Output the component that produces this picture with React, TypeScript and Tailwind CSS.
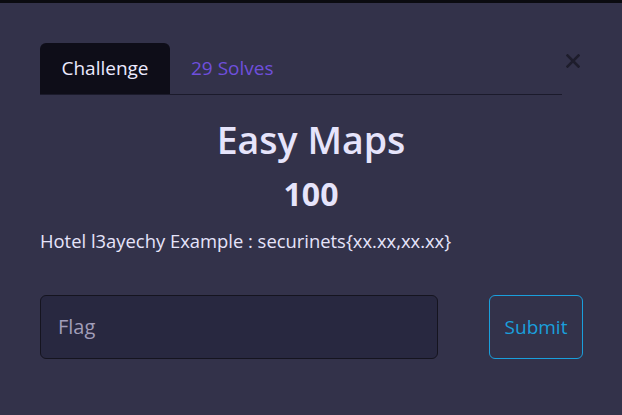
export default function App() {
  return (
    <div
      className="w-[622px] h-[415px] bg-[#33324a] border-t-[3px] border-[#0b0b10] overflow-hidden"
      style={{ fontFamily: '"Open Sans", "Noto Sans", sans-serif' }}
    >
      <div className="px-10 pt-10">
        {/* Tabs */}
        <div className="flex items-start">
          <div className="w-[522px] shrink-0 flex items-end border-b border-[#1b1a2b]">
            <div className="w-[130px] h-[51px] bg-[#0e0d18] rounded-t-md flex items-center justify-center text-[19px] text-[#eceaff]">
              Challenge
            </div>
            <div className="pl-[21px] h-[51px] flex items-center text-[19px] text-[#6f4fdc]">
              29 Solves
            </div>
          </div>
          <div className="ml-[4px] mt-[11px] shrink-0">
            <svg width="14" height="14" viewBox="0 0 14 14">
              <path d="M1.5 1.5L12.5 12.5M12.5 1.5L1.5 12.5" stroke="#1e1d2c" strokeWidth="2.6" strokeLinecap="square" />
            </svg>
          </div>
        </div>

        {/* Body */}
        <div className="w-[542px] text-center mt-[22px] text-[#e6e4fb]">
          <h1 className="text-[37.5px] font-semibold leading-[46px]">Easy Maps</h1>
          <div className="text-[32px] font-bold leading-[40px] mt-[11px]">100</div>
        </div>
        <p className="mt-[14px] text-[18.4px] text-[#e6e4fb] leading-[26px]">
          Hotel l3ayechy Example : securinets{'{'}xx.xx,xx.xx{'}'}
        </p>

        {/* Form */}
        <div className="mt-[41px] flex items-center w-[543px] justify-between">
          <div className="w-[398px] h-[64px] bg-[#282840] border border-[#15141f] rounded-md flex items-center px-[17px] text-[20px] text-[#a19db9]">
            Flag
          </div>
          <button className="w-[94px] h-[64px] border border-[#1a9fdc] rounded-md text-[19px] text-[#1a9fdc]">
            Submit
          </button>
        </div>
      </div>
    </div>
  );
}
